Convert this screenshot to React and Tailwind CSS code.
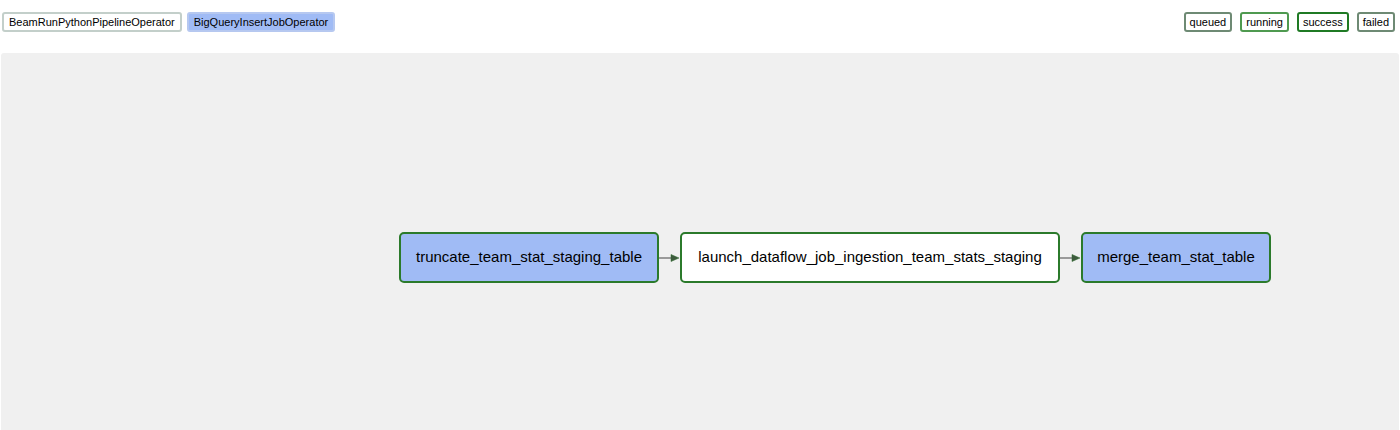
const legendOps = [
  { name: "BeamRunPythonPipelineOperator", bg: "bg-white", border: "border-[#c3cfca]" },
  { name: "BigQueryInsertJobOperator", bg: "bg-[#a0bbf5]", border: "border-[#b6c8f0]" },
];

const states = [
  { name: "queued", border: "border-[#6e8a74]" },
  { name: "running", border: "border-[#4f9a50]" },
  { name: "success", border: "border-[#1f7a24]" },
  { name: "failed", border: "border-[#6e8a74]" },
];

const tasks = [
  { id: "truncate_team_stat_staging_table", bg: "bg-[#a0bbf5]", w: "w-[260px]" },
  { id: "launch_dataflow_job_ingestion_team_stats_staging", bg: "bg-white", w: "w-[380px]" },
  { id: "merge_team_stat_table", bg: "bg-[#a0bbf5]", w: "w-[190px]" },
];

const Arrow = () => (
  <svg width="21" height="10" viewBox="0 0 21 10" className="shrink-0">
    <line x1="0" y1="5" x2="15" y2="5" stroke="#444" strokeWidth="1" />
    <path d="M12 1.5 L20 5 L12 8.5 Z" fill="#3d5a3d" stroke="#2d6b2d" strokeWidth="0.5" />
  </svg>
);

export default function App() {
  return (
    <div className="w-[1400px] h-[430px] bg-white flex flex-col font-['Liberation_Sans',Arial,sans-serif] text-black overflow-hidden">
      <div className="h-[53px] flex items-start justify-between pt-[12px] px-[2px]">
        <div className="flex gap-[5px]">
          {legendOps.map((op) => (
            <span
              key={op.name}
              className={`h-[20px] px-[5px] flex items-center text-[11px] rounded-[3px] border-2 ${op.bg} ${op.border}`}
            >
              {op.name}
            </span>
          ))}
        </div>
        <div className="flex gap-[8px] pr-[3px]">
          {states.map((s) => (
            <span
              key={s.name}
              className={`h-[20px] px-[4px] flex items-center text-[11px] rounded-[3px] border-2 bg-white ${s.border}`}
            >
              {s.name}
            </span>
          ))}
        </div>
      </div>

      <div className="flex-1 mx-[1px] bg-[#f0f0f0] rounded-t-[3px] pt-[179px] pl-[398px]">
        <div className="flex items-center">
          {tasks.map((t, i) => (
            <div key={t.id} className="flex items-center">
              <div
                className={`${t.w} h-[51px] flex items-center justify-center text-[15px] rounded-[5px] border-2 border-[#2b7a2b] ${t.bg}`}
              >
                {t.id}
              </div>
              {i < tasks.length - 1 && <Arrow />}
            </div>
          ))}
        </div>
      </div>
    </div>
  );
}
